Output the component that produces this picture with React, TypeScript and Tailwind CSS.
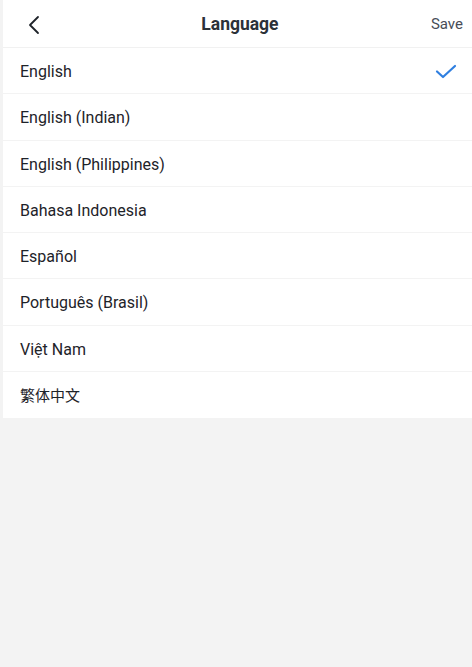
import { useState } from "react";

const LANGUAGES = [
  "English",
  "English (Indian)",
  "English (Philippines)",
  "Bahasa Indonesia",
  "Español",
  "Português (Brasil)",
  "Việt Nam",
  "繁体中文",
];

const FONT =
  "font-['Roboto','Noto_Sans_CJK_SC',sans-serif]";

export default function App() {
  const [selected, setSelected] = useState("English");

  return (
    <div className={`min-h-[667px] bg-[#f3f3f3] ${FONT}`}>
      <div className="ml-[3px] bg-white">
        <header className="flex h-[48px] items-center justify-between border-b border-[#f1f1f1] pl-[24px] pr-[9px] pt-[2px]">
          <button type="button" aria-label="Back" className="text-[#1e2329]">
            <svg width="14" height="20" viewBox="0 0 14 20" fill="none">
              <path
                d="M11 2 L3 10 L11 18"
                stroke="currentColor"
                strokeWidth="1.8"
                strokeLinecap="round"
                strokeLinejoin="round"
              />
            </svg>
          </button>
          <h1 className="ml-[8px] text-[17.5px] font-bold text-[#2b3139]">Language</h1>
          <button type="button" className="text-[15px] text-[#474d57]">
            Save
          </button>
        </header>
        <ul>
          {LANGUAGES.map((lang) => (
            <li
              key={lang}
              onClick={() => setSelected(lang)}
              className="flex h-[46.25px] items-center justify-between border-b border-[#f3f3f3] pl-[17px] pr-[15px] pt-[3px] text-[16px] text-[#1e2329] last:border-b-0"
            >
              <span className={/[\u4e00-\u9fff]/.test(lang) ? "text-[15px]" : ""}>
                {lang}
              </span>
              {selected === lang && (
                <svg width="22" height="16" viewBox="0 0 22 16" fill="none">
                  <path
                    d="M2 7.5 L8 13 L20 2"
                    stroke="#2f7fe0"
                    strokeWidth="2.2"
                    strokeLinecap="round"
                    strokeLinejoin="round"
                  />
                </svg>
              )}
            </li>
          ))}
        </ul>
      </div>
    </div>
  );
}
